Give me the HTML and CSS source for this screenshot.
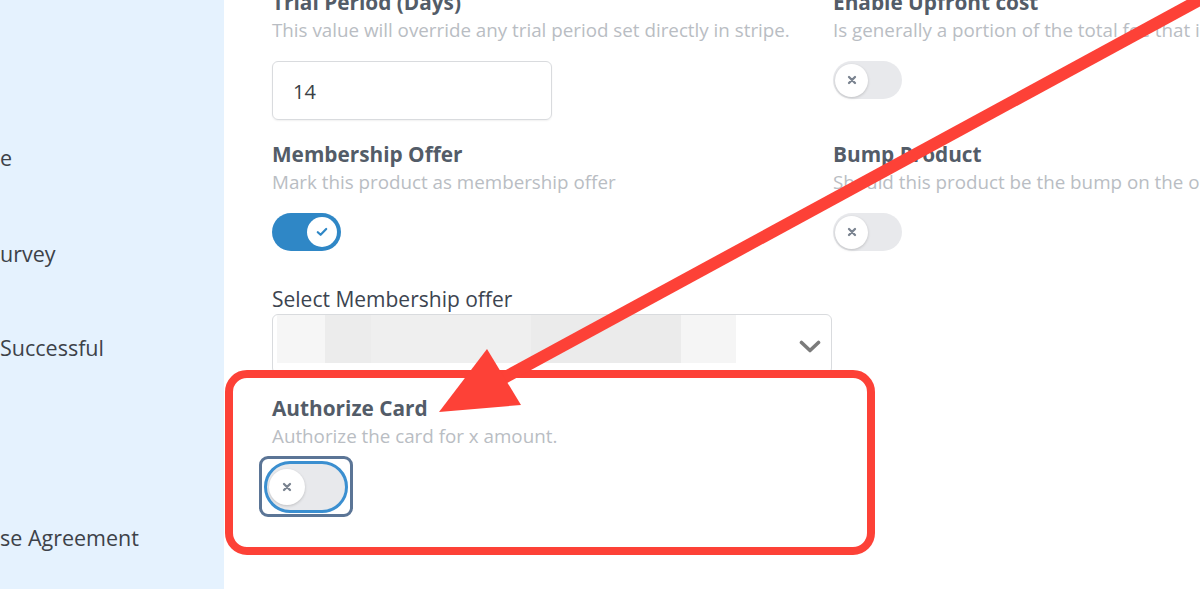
FILE: index.html
```html
<!DOCTYPE html>
<html>
<head>
<meta charset="utf-8">
<link rel="stylesheet" href="styles.css">
</head>
<body>
<div class="page">
  <aside class="sidebar">
    <div class="nav-item n1">e</div>
    <div class="nav-item n2">urvey</div>
    <div class="nav-item n3">Successful</div>
    <div class="nav-item n4">se Agreement</div>
  </aside>
  <main class="main">
    <div class="form">
      <div class="field">
        <div class="title">Trial Period (Days)</div>
        <div class="desc">This value will override any trial period set directly in stripe.</div>
        <div class="input">14</div>
      </div>
      <div class="field">
        <div class="title">Enable Upfront cost</div>
        <div class="desc">Is generally a portion of the total fee that is paid upfront</div>
        <div class="toggle off"><span class="knob"><svg width="10" height="10" viewBox="0 0 10 10"><path d="M2 2 L8 8 M8 2 L2 8" stroke="#7a8390" stroke-width="2.3" stroke-linecap="round"/></svg></span></div>
      </div>
      <div class="field">
        <div class="title">Membership Offer</div>
        <div class="desc">Mark this product as membership offer</div>
        <div class="toggle on"><span class="knob"><svg width="12" height="10" viewBox="0 0 12 10"><path d="M1.8 5.2 L4.6 7.8 L10.2 2" fill="none" stroke="#2f87c6" stroke-width="2.2" stroke-linecap="round" stroke-linejoin="round"/></svg></span></div>
      </div>
      <div class="field">
        <div class="title">Bump Product</div>
        <div class="desc">Should this product be the bump on the order page</div>
        <div class="toggle off"><span class="knob"><svg width="10" height="10" viewBox="0 0 10 10"><path d="M2 2 L8 8 M8 2 L2 8" stroke="#7a8390" stroke-width="2.3" stroke-linecap="round"/></svg></span></div>
      </div>
      <div class="field span">
        <div class="label">Select Membership offer</div>
        <div class="select">
          <div class="redact">
            <span class="r1"></span><span class="r2"></span><span class="r3"></span><span class="r4"></span><span class="r5"></span>
          </div>
          <svg class="chev" width="22" height="14" viewBox="0 0 22 14"><path d="M2.5 2.5 L11 10.5 L19.5 2.5" fill="none" stroke="#7b7b7b" stroke-width="3.6" stroke-linecap="round" stroke-linejoin="round"/></svg>
        </div>
      </div>
      <div class="field span">
        <div class="title">Authorize Card</div>
        <div class="desc">Authorize the card for x amount.</div>
        <div class="focus-ring"><div class="toggle off big"><span class="knob"><svg width="10" height="10" viewBox="0 0 10 10"><path d="M2 2 L8 8 M8 2 L2 8" stroke="#7a8390" stroke-width="2.3" stroke-linecap="round"/></svg></span></div></div>
      </div>
    </div>
  </main>
</div>
<svg class="annot" width="1200" height="589" viewBox="0 0 1200 589">
  <rect x="229" y="374" width="642" height="177" rx="18" ry="18" fill="none" stroke="#fd4137" stroke-width="8"/>
  <line x1="1225" y1="-14" x2="500" y2="380" stroke="#fd4137" stroke-width="12"/>
  <polygon points="439,412 487,349 521,405" fill="#fd4137"/>
</svg>
</body>
</html>
```

FILE: styles.css
```css
html, body {
  margin: 0;
  padding: 0;
  background: #ffffff;
}
body {
  width: 1200px;
  height: 589px;
  overflow: hidden;
  position: relative;
  font-family: "Open Sans", "Noto Sans", "Liberation Sans", sans-serif;
}
.page {
  display: flex;
  height: 589px;
}
.sidebar {
  width: 224px;
  flex: none;
  background: #e5f2fe;
  display: flex;
  flex-direction: column;
  padding-top: 143px;
  box-sizing: border-box;
}
.nav-item {
  font-size: 21.5px;
  line-height: 30px;
  color: #3d4249;
  white-space: nowrap;
}
.n2 { margin-top: 66px; }
.n3 { margin-top: 64px; }
.n4 { margin-top: 160px; }
.main {
  flex: 1;
  padding-left: 48px;
  overflow: hidden;
}
.form {
  margin-top: -12px;
  display: grid;
  grid-template-columns: 561px 400px;
  row-gap: 20px;
  align-items: start;
}
.field.span { grid-column: 1; }
.title {
  font-size: 20.8px;
  font-weight: 700;
  line-height: 28px;
  color: #535c68;
  white-space: nowrap;
}
.label {
  font-size: 21px;
  line-height: 28px;
  color: #3c4450;
  white-space: nowrap;
  margin-top: 14px;
}
.desc {
  font-size: 18.8px;
  line-height: 28px;
  color: #b9bdc3;
  white-space: nowrap;
}
.input {
  margin-top: 17px;
  width: 280px;
  height: 59px;
  box-sizing: border-box;
  border: 1px solid #d9dbde;
  border-radius: 6px;
  box-shadow: 0 1px 2px rgba(0,0,0,0.06);
  padding-left: 20px;
  font-size: 20px;
  line-height: 59px;
  color: #3a3f45;
}
.toggle {
  margin-top: 17px;
  width: 69px;
  height: 38px;
  border-radius: 19px;
  box-sizing: border-box;
  position: relative;
  display: flex;
  align-items: center;
}
.toggle.off {
  background: #e8e9ec;
  justify-content: flex-start;
  padding-left: 2px;
}
.toggle.on {
  background: #2f87c6;
  justify-content: flex-end;
  padding-right: 4px;
}
.knob {
  width: 33px;
  height: 33px;
  border-radius: 50%;
  background: #ffffff;
  box-shadow: 0 1px 3px rgba(0,0,0,0.18);
  display: flex;
  align-items: center;
  justify-content: center;
}
.toggle.on .knob { width: 30px; height: 30px; box-shadow: none; }
.select {
  margin-top: 1px;
  width: 560px;
  height: 60px;
  box-sizing: border-box;
  border: 1px solid #d9dbde;
  border-radius: 6px;
  display: flex;
  align-items: center;
  justify-content: space-between;
  padding: 0 10px 0 4px;
}
.redact {
  display: flex;
  height: 48px;
  align-self: flex-start;
}
.redact span { display: block; height: 48px; }
.r1 { width: 48px; background: #f6f6f6; }
.r2 { width: 46px; background: #ececec; }
.r3 { width: 160px; background: #efefef; }
.r4 { width: 150px; background: #ebebeb; }
.r5 { width: 55px; background: #f5f5f5; }
.chev { margin-top: 6px; }
.focus-ring {
  margin-top: 6px;
  margin-left: -13px;
  width: 94px;
  height: 61px;
  box-sizing: border-box;
  border: 3px solid #5b7596;
  border-radius: 9px;
  display: flex;
  align-items: center;
  justify-content: center;
}
.toggle.big {
  margin-top: 0;
  width: 84px;
  height: 52px;
  border-radius: 26px;
  border: 3px solid #3b8fd0;
  padding-left: 2px;
}
.toggle.big .knob { width: 36px; height: 36px; }
.annot {
  position: absolute;
  left: 0;
  top: 0;
  pointer-events: none;
}
```
